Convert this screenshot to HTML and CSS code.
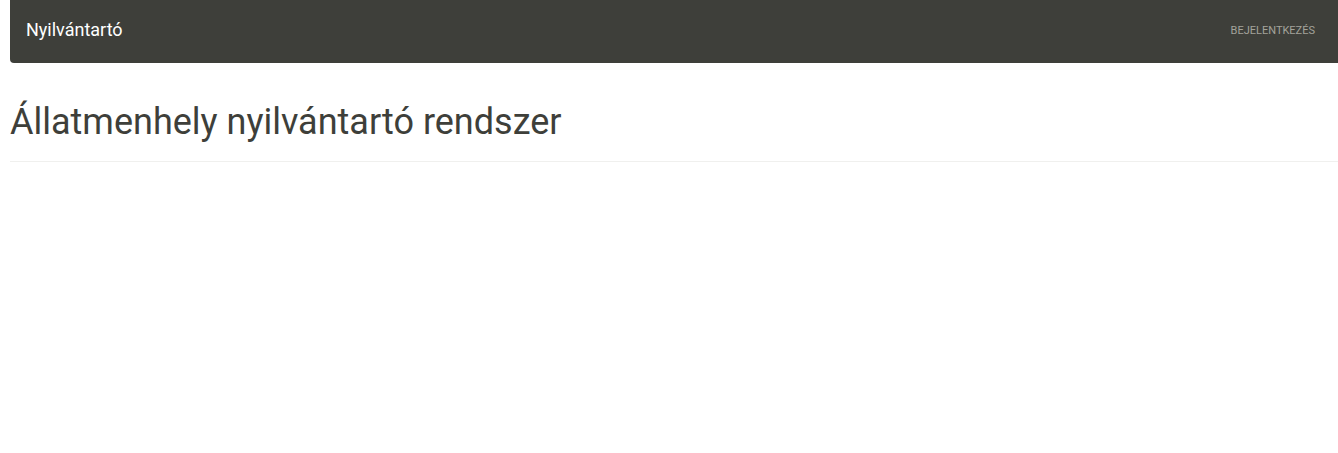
FILE: index.html
```html
<!DOCTYPE html>
<html lang="hu">
<head>
<meta charset="utf-8">
<title>Nyilvántartó</title>
<link rel="stylesheet" href="styles.css">
</head>
<body>
<div class="page">
  <nav class="navbar">
    <a class="brand" href="#">Nyilvántartó</a>
    <a class="nav-link" href="#">Bejelentkezés</a>
  </nav>
  <div class="page-header">
    <h1>Állatmenhely nyilvántartó rendszer</h1>
  </div>
</div>
</body>
</html>
```

FILE: styles.css
```css
html, body {
  margin: 0;
  padding: 0;
  background: #fff;
  font-family: Roboto, "Liberation Sans", sans-serif;
  overflow: hidden;
}
.page {
  padding-left: 10px;
}
.navbar {
  height: 63px;
  background: #3e3f3a;
  border-radius: 0 0 0 4px;
  display: flex;
  align-items: center;
  justify-content: space-between;
  padding: 0 23px 0 16px;
  box-sizing: border-box;
}
.brand {
  color: #fff;
  text-decoration: none;
  font-size: 18px;
  line-height: 20px;
  margin-top: -3px;
}
.nav-link {
  color: #a3a39a;
  text-decoration: none;
  text-transform: uppercase;
  font-size: 11px;
  line-height: 14px;
  margin-top: -2px;
}
.page-header {
  margin-top: 37px;
  border-bottom: 1px solid #f0f0ee;
  padding-bottom: 17px;
}
.page-header h1 {
  margin: 0;
  font-weight: 400;
  font-size: 36px;
  line-height: 44px;
  color: #3e3f3a;
}
```
